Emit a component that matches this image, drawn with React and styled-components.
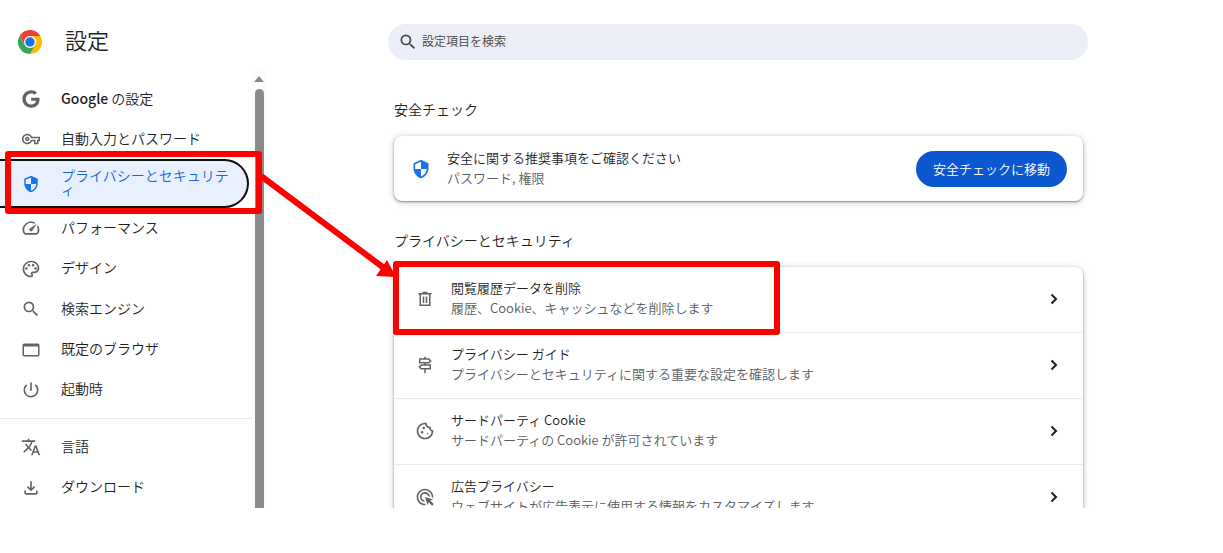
import React, { useState } from 'react';
import styled, { createGlobalStyle, css } from 'styled-components';
import { FaGoogle } from 'react-icons/fa';
import {
  MdAdsClick,
  MdOutlineCookie,
  MdOutlineFileDownload,
  MdOutlinePalette,
  MdOutlineVpnKey,
  MdPowerSettingsNew,
  MdSearch,
  MdSpeed,
  MdTranslate,
} from 'react-icons/md';

const GlobalStyle = createGlobalStyle`
  * {
    box-sizing: border-box;
  }

  body {
    margin: 0;
    background: #fff;
    color: #1f1f1f;
    font-family: 'Noto Sans CJK JP', 'Noto Sans', sans-serif;
    font-size: 14px;
    font-weight: 350;
  }

  button, input {
    font-family: inherit;
    font-weight: inherit;
  }
`;

const Page = styled.div`
  position: relative;
  display: flex;
  height: calc(100vh - 45px);
  overflow: hidden;
`;

const Sidebar = styled.aside`
  display: flex;
  flex-direction: column;
  flex: 0 0 266px;
`;

const Brand = styled.header`
  display: flex;
  align-items: center;
  gap: 23px;
  height: 70px;
  padding: 14px 18px 0;
`;

const Title = styled.h1`
  margin: 0;
  padding-bottom: 6px;
  font-size: 22px;
  line-height: 32px;
  font-weight: inherit;
`;

const MenuArea = styled.div`
  display: flex;
  flex: 1;
  min-height: 0;
`;

const Menu = styled.nav`
  display: flex;
  flex: 1;
  flex-direction: column;
  padding-top: 9px;
`;

const MenuItem = styled.div`
  position: relative;
  display: flex;
  flex: 1 0 auto;
  min-height: 40px;
  margin-right: 3px;

  ${({ $active }) => $active && css`
    flex-grow: 0;
    height: 49px;
  `}
`;

const IconSlot = styled.span`
  display: flex;
  flex: 0 0 20px;
  justify-content: center;
  color: ${({ $active }) => ($active ? '#1a73e8' : '#5f6368')};
`;

const MenuLink = styled.a`
  display: flex;
  flex: 1;
  align-items: center;
  gap: 20px;
  padding: 0 14px 0 21px;
  border: 2px solid transparent;
  border-left: 0;
  border-radius: 0 25px 25px 0;
  color: #1f1f1f;
  line-height: 14px;
  text-decoration: none;

  ${({ $active }) => $active && css`
    border-color: #101010;
    background: #e8f0fe;
    color: #1967d2;
  `}
`;

const MenuLabel = styled.span`
  padding-bottom: 3px;
`;

const Strong = styled.span`
  font-weight: 500;
`;

const MenuDivider = styled.hr`
  width: 100%;
  margin: 8px 0;
  border: 0;
  border-top: 1px solid #e9eaec;
`;

const Scrollbar = styled.div`
  display: flex;
  flex: 0 0 14px;
  flex-direction: column;
  align-items: center;
  gap: 7px;
  padding-top: 6px;
  background: #fcfcfc;
`;

const ScrollArrow = styled.span`
  border: 5px solid transparent;
  border-top: 0;
  border-bottom: 6px solid #8b8b8b;
`;

const ScrollThumb = styled.span`
  flex: 1;
  width: 9px;
  border-radius: 5px 5px 0 0;
  background: #8b8b8b;
`;

const Main = styled.main`
  flex: 1;
  padding: 24px 20px 0 7px;
`;

const Column = styled.div`
  max-width: 700px;
  margin: 0 auto;
`;

const SearchBox = styled.label`
  display: flex;
  align-items: center;
  gap: 4px;
  height: 36px;
  padding: 0 10px;
  border-radius: 18px;
  background: #ebeef7;
  color: #474747;
`;

const SearchInput = styled.input`
  flex: 1;
  padding: 0 0 3px;
  border: 0;
  outline: 0;
  background: transparent;
  color: #1f1f1f;
  font-size: 12px;

  &::placeholder {
    color: #474747;
    opacity: 1;
  }
`;

const Section = styled.section`
  padding: 0 5px 0 6px;
`;

const SectionTitle = styled.h2`
  margin: 0;
  padding: ${({ $first }) => ($first ? '39px' : '29px')} 0 17px;
  font-size: 14px;
  line-height: 20px;
  font-weight: inherit;
`;

const Card = styled.div`
  border-radius: 8px;
  background: #fff;
  box-shadow: 0 1px 2px rgba(0, 0, 0, 0.4), 0 1px 6px 1px rgba(0, 0, 0, 0.16);
`;

const SafetyCard = styled(Card)`
  display: flex;
  align-items: center;
  gap: 16px;
  height: 65px;
  padding: 0 16px 0 17px;
`;

const Texts = styled.span`
  display: flex;
  flex: 1;
  flex-direction: column;
  padding-bottom: 2px;
  font-size: 13px;
  line-height: 20px;
  text-align: left;
`;

const SubText = styled.span`
  color: #5a5d61;
`;

const PrimaryButton = styled.button`
  height: 36px;
  padding: 0 17px 1px;
  border: 0;
  border-radius: 18px;
  background: #0b57d0;
  color: #fff;
  font-size: 13px;
  cursor: pointer;
`;

const RowItem = styled.div`
  position: relative;

  & + & {
    border-top: 1px solid #ececee;
  }
`;

const RowButton = styled.button`
  display: flex;
  align-items: center;
  gap: 16px;
  width: 100%;
  height: 65px;
  padding: 0 20px 2px 21px;
  border: 0;
  background: transparent;
  color: #1f1f1f;
  cursor: pointer;
`;

// Red frame laid over the element being pointed out
const Highlight = styled.span`
  position: absolute;
  z-index: 2;
  inset: ${({ $inset }) => $inset};
  width: ${({ $width }) => $width || 'auto'};
  border: 6px solid #f00;
  border-radius: 3px;
  pointer-events: none;
`;

const Arrow = styled.svg`
  position: absolute;
  top: 168px;
  left: 258px;
  z-index: 3;
  pointer-events: none;
`;

const ChromeLogo = () => (
  <svg width="24" height="24" viewBox="0 0 48 48" aria-hidden="true">
    <path fill="#fbbc04" d="M24 12H44.8A24 24 0 0 1 24 48L34.4 30Z" />
    <path fill="#34a853" d="M34.4 30 24 48A24 24 0 0 1 3.2 12L13.6 30Z" />
    <path fill="#ea4335" d="M3.2 12 13.6 30 24 24V12H44.8A24 24 0 0 0 3.2 12Z" />
    <circle cx="24" cy="24" r="12" fill="#fff" />
    <circle cx="24" cy="24" r="9.5" fill="#1a73e8" />
  </svg>
);

const ShieldIcon = ({ size }) => (
  <svg width={size} height={size} viewBox="0 0 24 24" fill="currentColor" aria-hidden="true">
    <path d="M12 1 3 5v6c0 5.55 3.84 10.74 9 12 5.16-1.26 9-6.45 9-12V5l-9-4zm0 10.99h7c-.53 4.12-3.28 7.79-7 8.94V12H5V6.3l7-3.11v8.8z" />
  </svg>
);

const WindowIcon = () => (
  <svg width="18" height="18" viewBox="0 0 18 18" fill="none" stroke="currentColor" strokeWidth="1.5" aria-hidden="true">
    <rect x="1.250" y="3.250" width="15.500" height="11.500" rx="1" />
    <path strokeWidth="2" d="M1 4.500h16" />
  </svg>
);

const TrashIcon = () => (
  <svg width="18" height="18" viewBox="0 0 18 18" fill="none" stroke="currentColor" strokeWidth="1.5" aria-hidden="true">
    <path d="M2.500 3.750h13M6.500 2.500h5M4.250 4v11.250h9.500V4M7.500 6.500v6.500M10.500 6.500v6.500" />
  </svg>
);

const SignpostIcon = () => (
  <svg width="18" height="18" viewBox="0 0 24 24" fill="none" stroke="currentColor" strokeWidth="2" aria-hidden="true">
    <path d="M12 1v3M12 9v3M12 17v6M5 4h12l2.500 2.500-2.500 2.500H5zM19 12H7l-2.500 2.500 2.500 2.500h12z" />
  </svg>
);

const ChevronIcon = () => (
  <svg width="18" height="18" viewBox="0 0 18 18" fill="none" stroke="currentColor" strokeWidth="2" aria-hidden="true">
    <path d="m6.500 4.500 4.500 4.500-4.500 4.500" />
  </svg>
);

const menuItems = [
  { id: 'google', icon: FaGoogle, size: 18, label: <><Strong>Google</Strong> の設定</> },
  { id: 'autofill', icon: MdOutlineVpnKey, size: 18, label: '自動入力とパスワード' },
  { id: 'privacy', icon: ShieldIcon, size: 18, label: 'プライバシーとセキュリティ' },
  { id: 'performance', icon: MdSpeed, size: 20, label: 'パフォーマンス' },
  { id: 'appearance', icon: MdOutlinePalette, size: 20, label: 'デザイン' },
  { id: 'search', icon: MdSearch, size: 20, label: '検索エンジン' },
  { id: 'browser', icon: WindowIcon, size: 18, label: '既定のブラウザ' },
  { id: 'startup', icon: MdPowerSettingsNew, size: 20, label: '起動時' },
  { id: 'languages', icon: MdTranslate, size: 20, label: '言語', divider: true },
  { id: 'downloads', icon: MdOutlineFileDownload, size: 20, label: 'ダウンロード' },
];

const privacyRows = [
  {
    icon: TrashIcon,
    title: '閲覧履歴データを削除',
    text: '履歴、Cookie、キャッシュなどを削除します',
    highlight: true,
  },
  {
    icon: SignpostIcon,
    title: 'プライバシー ガイド',
    text: 'プライバシーとセキュリティに関する重要な設定を確認します',
  },
  {
    icon: MdOutlineCookie,
    title: 'サードパーティ Cookie',
    text: 'サードパーティの Cookie が許可されています',
  },
  {
    icon: MdAdsClick,
    title: '広告プライバシー',
    text: 'ウェブサイトが広告表示に使用する情報をカスタマイズします',
  },
];

const App = () => {
  const [query, setQuery] = useState('');

  return (
    <>
      <GlobalStyle />
      <Page>
        <Sidebar>
          <Brand>
            <ChromeLogo />
            <Title>設定</Title>
          </Brand>
          <MenuArea>
            <Menu>
              {menuItems.map(({ id, icon: Icon, size, label, divider }) => {
                const active = id === 'privacy';
                return (
                  <React.Fragment key={id}>
                    {divider && <MenuDivider />}
                    <MenuItem $active={active}>
                      <MenuLink href={`#${id}`} $active={active}>
                        <IconSlot $active={active}>
                          <Icon size={size} />
                        </IconSlot>
                        <MenuLabel>{label}</MenuLabel>
                      </MenuLink>
                      {active && <Highlight $inset="-8px -13px -6px 5px" />}
                    </MenuItem>
                  </React.Fragment>
                );
              })}
            </Menu>
            <Scrollbar>
              <ScrollArrow />
              <ScrollThumb />
            </Scrollbar>
          </MenuArea>
        </Sidebar>

        <Main>
          <Column>
            <SearchBox>
              <MdSearch size={20} />
              <SearchInput
                type="text"
                aria-label="設定項目を検索"
                placeholder="設定項目を検索"
                value={query}
                onChange={(e) => setQuery(e.target.value)}
              />
            </SearchBox>

            <Section>
              <SectionTitle $first>安全チェック</SectionTitle>
              <SafetyCard>
                <IconSlot $active>
                  <ShieldIcon size={20} />
                </IconSlot>
                <Texts>
                  <span>安全に関する推奨事項をご確認ください</span>
                  <SubText>パスワード, 権限</SubText>
                </Texts>
                <PrimaryButton type="button">安全チェックに移動</PrimaryButton>
              </SafetyCard>
            </Section>

            <Section>
              <SectionTitle>プライバシーとセキュリティ</SectionTitle>
              <Card>
                {privacyRows.map(({ icon: Icon, title, text, highlight }) => (
                  <RowItem key={title}>
                    <RowButton type="button">
                      <IconSlot>
                        <Icon size={20} />
                      </IconSlot>
                      <Texts>
                        <span>{title}</span>
                        <SubText>{text}</SubText>
                      </Texts>
                      <ChevronIcon />
                    </RowButton>
                    {highlight && <Highlight $inset="-6px auto -3px -1px" $width="387px" />}
                  </RowItem>
                ))}
              </Card>
            </Section>
          </Column>
        </Main>

        <Arrow width="140" height="112" viewBox="0 0 140 112" aria-hidden="true">
          <path d="M3 8 126 100" stroke="#f00" strokeWidth="6" />
          <path d="M138 109 118 108 129 92Z" fill="#f00" />
        </Arrow>
      </Page>
    </>
  );
};

export default App;
